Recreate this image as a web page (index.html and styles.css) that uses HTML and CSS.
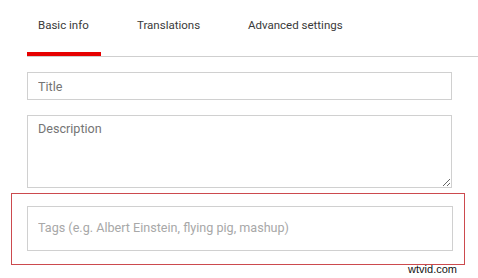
FILE: index.html
```html
<!DOCTYPE html>
<html>
<head>
<meta charset="utf-8">
<link rel="stylesheet" href="styles.css">
</head>
<body>
<div class="tabs">
  <div class="tab tab-basic active">Basic info</div>
  <div class="tab tab-translations">Translations</div>
  <div class="tab tab-advanced">Advanced settings</div>
</div>
<div class="form">
  <input class="field field-title" type="text" placeholder="Title">
  <textarea class="field field-desc" placeholder="Description"></textarea>
</div>
<div class="highlight">
  <input class="field field-tags" type="text" placeholder="Tags (e.g. Albert Einstein, flying pig, mashup)">
</div>
<div class="watermark">wtvid.com</div>
</body>
</html>
```
FILE: styles.css
```css
html, body {
  margin: 0;
  padding: 0;
  background: #ffffff;
  font-family: Roboto, "Noto Sans", sans-serif;
  overflow: hidden;
}

.tabs {
  display: flex;
  margin-left: 27px;
  border-bottom: 1px solid #cfcfcf;
}

.tab {
  box-sizing: border-box;
  height: 56px;
  padding: 17px 11px 0 11px;
  font-size: 11.5px;
  line-height: 16px;
  color: #3a3a3a;
  white-space: nowrap;
  border-bottom: 4px solid transparent;
}

.tab.active {
  border-bottom-color: #e60000;
}

.tab-basic {
  width: 74px;
}

.tab-translations {
  width: 83px;
  margin-left: 25px;
}

.tab-advanced {
  margin-left: 28px;
}

.form {
  display: flex;
  flex-direction: column;
  padding: 15px 26px 0 27px;
  gap: 15px;
}

.field {
  box-sizing: border-box;
  display: block;
  width: 100%;
  margin: 0;
  border: 1px solid #d0d0d0;
  border-radius: 0;
  background: #ffffff;
  font-family: Roboto, "Noto Sans", sans-serif;
  font-size: 12.6px;
  color: #333333;
  padding: 0 10px;
  outline: none;
}

.field-title {
  height: 28px;
}

.field-desc {
  height: 73px;
  padding-top: 5px;
  resize: vertical;
}

.field-title::placeholder,
.field-desc::placeholder {
  color: #757575;
}

.highlight {
  box-sizing: border-box;
  width: 454px;
  margin: 5px 0 0 11px;
  border: 1px solid #cc4a4e;
  padding: 12px 11px 13px 15px;
}

.field-tags {
  height: 45px;
  padding-bottom: 2px;
}

.field-tags::placeholder {
  color: #a8a8a8;
}

.watermark {
  text-align: right;
  padding-right: 21px;
  font-family: "Liberation Sans", Arial, sans-serif;
  font-size: 11px;
  line-height: 11px;
  margin-top: -1px;
  color: #111111;
}
```
